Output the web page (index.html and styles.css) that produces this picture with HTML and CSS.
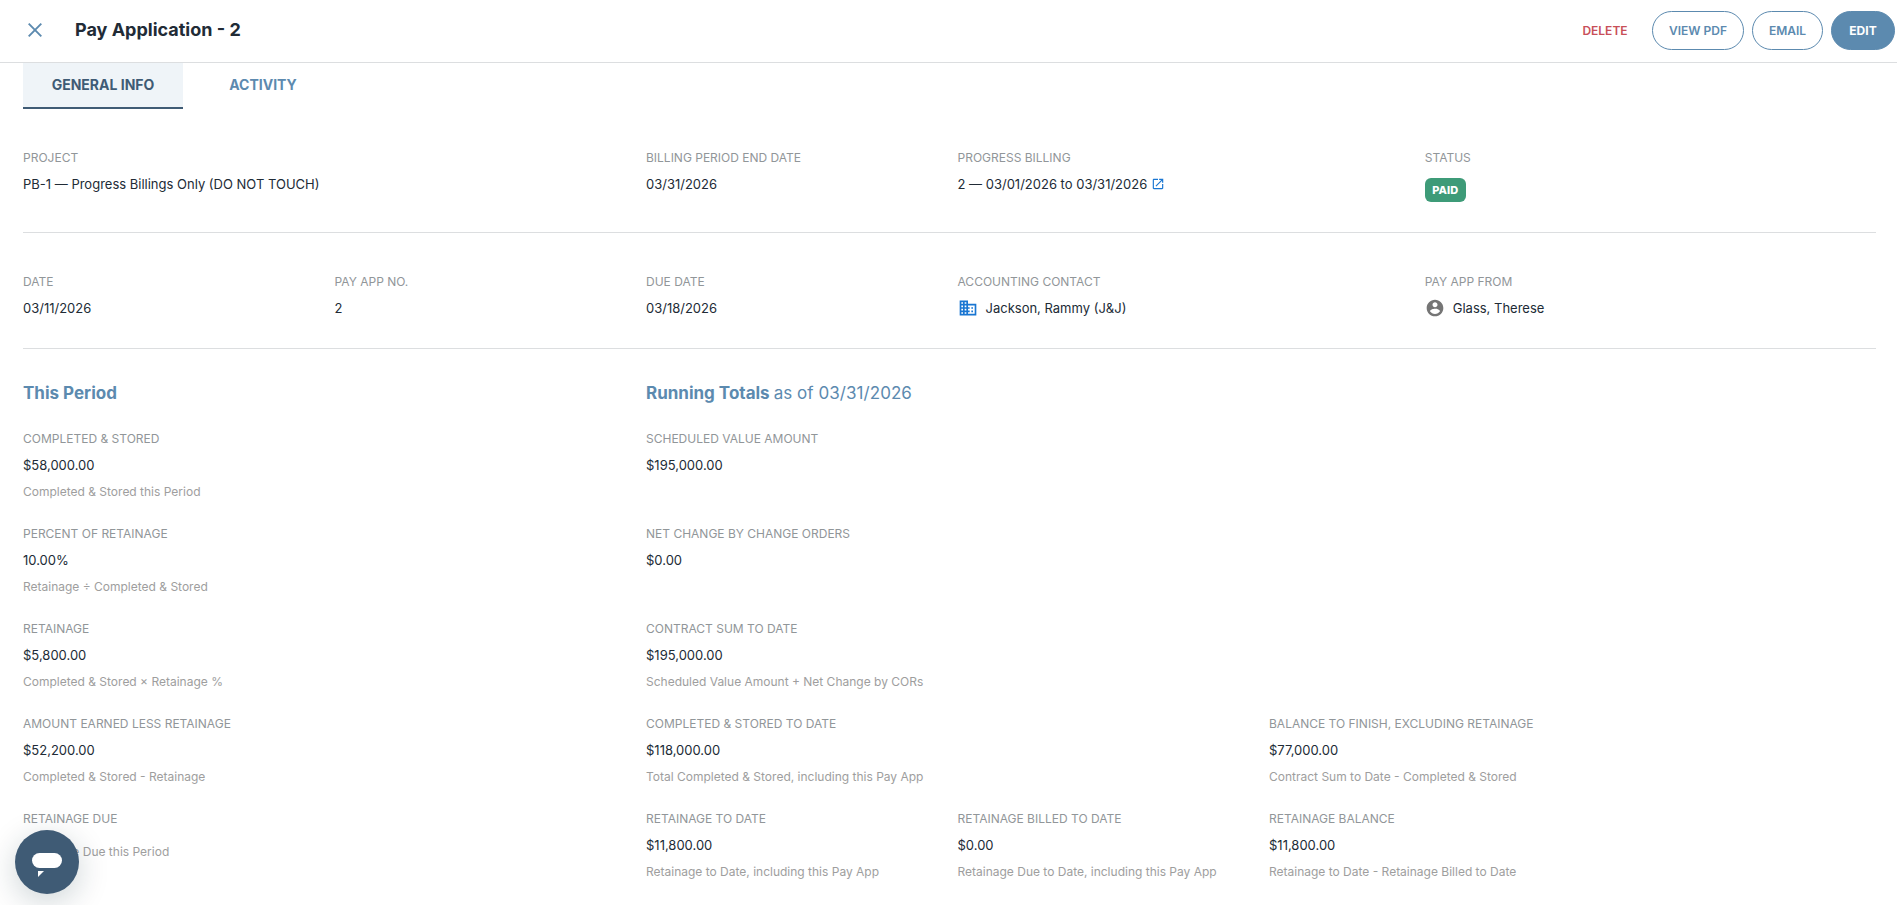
FILE: index.html
```html
<!DOCTYPE html>
<html lang="en">
  <head>
    <meta charset="UTF-8" />
    <meta name="viewport" content="width=device-width, initial-scale=1.0" />
    <title>Pay Application - 2</title>
    <link rel="stylesheet" href="styles.css">
  </head>
  <body>
    <header class="header">
      <button class="close" aria-label="Close">
        <svg width="14" height="14" viewBox="0 0 14 14">
          <path d="M0.7 0.7L13.3 13.3M13.3 0.7L0.7 13.3" fill="none" stroke="currentColor" stroke-width="1.9" />
        </svg>
      </button>
      <h1>Pay Application - 2</h1>
      <div class="actions">
        <button class="btn btn-delete">DELETE</button>
        <button class="btn btn-pdf">VIEW PDF</button>
        <button class="btn btn-email">EMAIL</button>
        <button class="btn btn-edit">EDIT</button>
      </div>
    </header>

    <nav class="tabs">
      <a class="tab active">GENERAL INFO</a>
      <a class="tab">ACTIVITY</a>
    </nav>

    <main>
      <section class="grid top">
        <div class="field c1">
          <div class="label">PROJECT</div>
          <div class="value">PB-1 — Progress Billings Only (DO NOT TOUCH)</div>
        </div>
        <div class="field c5">
          <div class="label">BILLING PERIOD END DATE</div>
          <div class="value">03/31/2026</div>
        </div>
        <div class="field c7">
          <div class="label">PROGRESS BILLING</div>
          <div class="value">
            <span>2 — 03/01/2026 to 03/31/2026</span>
            <svg class="open" width="14" height="14" viewBox="0 0 24 24">
              <path fill="currentColor" d="M19 19H5V5h7V3H5c-1.11 0-2 .9-2 2v14c0 1.1.89 2 2 2h14c1.1 0 2-.9 2-2v-7h-2v7zM14 3v2h3.59l-9.83 9.83 1.41 1.41L19 6.41V10h2V3h-7z" />
            </svg>
          </div>
        </div>
        <div class="field c10">
          <div class="label">STATUS</div>
          <span class="badge">PAID</span>
        </div>
      </section>

      <section class="grid dates">
        <div class="field c1">
          <div class="label">DATE</div>
          <div class="value">03/11/2026</div>
        </div>
        <div class="field c3">
          <div class="label">PAY APP NO.</div>
          <div class="value">2</div>
        </div>
        <div class="field c5">
          <div class="label">DUE DATE</div>
          <div class="value">03/18/2026</div>
        </div>
        <div class="field c7">
          <div class="label">ACCOUNTING CONTACT</div>
          <div class="value">
            <svg class="contact company" width="20" height="20" viewBox="0 0 24 24">
              <path fill="currentColor" d="M12 7V3H2v18h20V7H12zM6 19H4v-2h2v2zm0-4H4v-2h2v2zm0-4H4V9h2v2zm0-4H4V5h2v2zm4 12H8v-2h2v2zm0-4H8v-2h2v2zm0-4H8V9h2v2zm0-4H8V5h2v2zm10 12h-8v-2h2v-2h-2v-2h2v-2h-2V9h8v10zm-2-8h-2v2h2v-2zm0 4h-2v2h2v-2z" />
            </svg>
            <span>Jackson, Rammy (J&amp;J)</span>
          </div>
        </div>
        <div class="field c10">
          <div class="label">PAY APP FROM</div>
          <div class="value">
            <svg class="contact" width="20" height="20" viewBox="0 0 24 24">
              <path fill="currentColor" d="M12 2C6.48 2 2 6.48 2 12s4.48 10 10 10 10-4.48 10-10S17.52 2 12 2zm0 3c1.66 0 3 1.34 3 3s-1.34 3-3 3-3-1.34-3-3 1.34-3 3-3zm0 14.2c-2.5 0-4.71-1.28-6-3.22.03-1.99 4-3.08 6-3.08 1.99 0 5.97 1.09 6 3.08-1.29 1.94-3.5 3.22-6 3.22z" />
            </svg>
            <span>Glass, Therese</span>
          </div>
        </div>
      </section>

      <section class="grid totals">
        <h2 class="c1">This Period</h2>
        <h2 class="c5">Running Totals <span>as of 03/31/2026</span></h2>

        <div class="field c1">
          <div class="label">COMPLETED &amp; STORED</div>
          <div class="value">$58,000.00</div>
          <div class="hint">Completed &amp; Stored this Period</div>
        </div>
        <div class="field c5">
          <div class="label">SCHEDULED VALUE AMOUNT</div>
          <div class="value">$195,000.00</div>
        </div>

        <div class="field c1">
          <div class="label">PERCENT OF RETAINAGE</div>
          <div class="value">10.00%</div>
          <div class="hint">Retainage ÷ Completed &amp; Stored</div>
        </div>
        <div class="field c5">
          <div class="label">NET CHANGE BY CHANGE ORDERS</div>
          <div class="value">$0.00</div>
        </div>

        <div class="field c1">
          <div class="label">RETAINAGE</div>
          <div class="value">$5,800.00</div>
          <div class="hint">Completed &amp; Stored × Retainage %</div>
        </div>
        <div class="field c5">
          <div class="label">CONTRACT SUM TO DATE</div>
          <div class="value">$195,000.00</div>
          <div class="hint">Scheduled Value Amount + Net Change by CORs</div>
        </div>

        <div class="field c1">
          <div class="label">AMOUNT EARNED LESS RETAINAGE</div>
          <div class="value">$52,200.00</div>
          <div class="hint">Completed &amp; Stored - Retainage</div>
        </div>
        <div class="field c5">
          <div class="label">COMPLETED &amp; STORED TO DATE</div>
          <div class="value">$118,000.00</div>
          <div class="hint">Total Completed &amp; Stored, including this Pay App</div>
        </div>
        <div class="field c9">
          <div class="label">BALANCE TO FINISH, EXCLUDING RETAINAGE</div>
          <div class="value">$77,000.00</div>
          <div class="hint">Contract Sum to Date - Completed &amp; Stored</div>
        </div>

        <div class="field c1">
          <div class="label">RETAINAGE DUE</div>
          <div class="value empty"></div>
          <div class="hint">Retainage Due this Period</div>
        </div>
        <div class="field c5">
          <div class="label">RETAINAGE TO DATE</div>
          <div class="value">$11,800.00</div>
          <div class="hint">Retainage to Date, including this Pay App</div>
        </div>
        <div class="field c7">
          <div class="label">RETAINAGE BILLED TO DATE</div>
          <div class="value">$0.00</div>
          <div class="hint">Retainage Due to Date, including this Pay App</div>
        </div>
        <div class="field c9">
          <div class="label">RETAINAGE BALANCE</div>
          <div class="value">$11,800.00</div>
          <div class="hint">Retainage to Date - Retainage Billed to Date</div>
        </div>
      </section>
    </main>

    <button class="chat" aria-label="Chat">
      <svg width="64" height="64" viewBox="0 0 64 64">
        <rect x="17" y="23" width="30" height="15" rx="7.5" fill="#fff" />
        <path d="M23 41h6l-6 6z" fill="#fff" />
      </svg>
    </button>
  </body>
</html>
```
FILE: styles.css
```css
* {
  box-sizing: border-box;
}

body {
  margin: 0;
  height: 100vh;
  overflow: hidden;
  font-family: Inter, "Liberation Sans", sans-serif;
  font-size: 13px;
  color: #212b36;
  background-color: #fff;
}

button {
  font-family: inherit;
  border: 0;
  padding: 0;
  background: none;
  cursor: pointer;
}

.header {
  display: flex;
  align-items: center;
  height: 63px;
  padding: 0 2px 2px 28px;
  border-bottom: 1px solid #dcdee0;
}

.close {
  display: flex;
  width: 14px;
  height: 14px;
  margin-right: 33px;
  color: #5c8aaf;
}

h1 {
  margin: 0;
  font-size: 18px;
  font-weight: 700;
  line-height: 24px;
}

.actions {
  display: flex;
  gap: 8px;
  margin-left: auto;
}

.btn {
  height: 39px;
  border: 1px solid #5c8aaf;
  border-radius: 20px;
  font-size: 12px;
  font-weight: 600;
  color: #5c8aaf;
}

.btn-delete {
  width: 78px;
  border-color: transparent;
  color: #c84f58;
}

.btn-pdf {
  width: 92px;
}

.btn-email {
  width: 71px;
}

.btn-edit {
  width: 64px;
  font-weight: 700;
  background-color: #5c8aaf;
  color: #fff;
}

.tabs {
  display: flex;
  gap: 16px;
  padding-left: 23px;
}

.tab {
  width: 160px;
  height: 46px;
  font-size: 14px;
  font-weight: 700;
  line-height: 44px;
  text-align: center;
  color: #5c8aaf;
}

.tab + .tab {
  width: 128px;
}

.tab.active {
  color: #3f5b75;
  background-color: #eff4f8;
  border-bottom: 2px solid #3f5b75;
}

main {
  padding: 0 21px 0 23px;
}

.grid {
  display: grid;
  grid-template-columns: repeat(12, minmax(0, 1fr));
  column-gap: 16px;
}

.top {
  height: 124px;
  padding-top: 41px;
  border-bottom: 1px solid #dcdee0;
}

.dates {
  height: 116px;
  padding-top: 41px;
  border-bottom: 1px solid #dcdee0;
}

.totals {
  grid-template-rows: 82px;
  grid-auto-rows: 95px;
}

.c1 {
  grid-column: 1 / span 4;
}

.c3 {
  grid-column: 3 / span 2;
}

.dates .c1 {
  grid-column-end: span 2;
}

.c5 {
  grid-column: 5 / span 2;
  white-space: nowrap;
}

.c7 {
  grid-column: 7 / span 2;
  white-space: nowrap;
}

.c9 {
  grid-column: 9 / span 4;
}

.c10 {
  grid-column: 10 / span 3;
}

h2 {
  margin: 0;
  padding-top: 32px;
  font-size: 17px;
  font-weight: 700;
  line-height: 24px;
  color: #5c8aaf;
}

h2 span {
  font-weight: 400;
  letter-spacing: 0.05px;
}

.label {
  font-size: 12px;
  line-height: 16px;
  color: #919699;
}

.value {
  display: flex;
  align-items: center;
  height: 20px;
  margin-top: 8px;
}

.value.empty {
  height: 0;
  margin-top: 9px;
}

.hint {
  margin-top: 9px;
  font-size: 12px;
  line-height: 16px;
  color: #9e9e9e;
}

.value.empty + .hint {
  margin-top: 8px;
}

.open {
  margin-left: 4px;
  color: #1976d2;
}

.contact {
  margin-right: 8px;
  color: #757575;
}

.company {
  color: #1976d2;
}

.badge {
  display: inline-block;
  width: 41px;
  height: 24px;
  margin-top: 12px;
  border-radius: 6px;
  font-size: 11px;
  font-weight: 800;
  line-height: 24px;
  text-align: center;
  color: #fff;
  background-color: #3e9b78;
}

.chat {
  position: fixed;
  left: 15px;
  bottom: 11px;
  width: 64px;
  height: 64px;
  border-radius: 50%;
  background-color: #3f5b75;
  box-shadow: 0 8px 32px rgba(0, 40, 50, 0.2);
}
```
